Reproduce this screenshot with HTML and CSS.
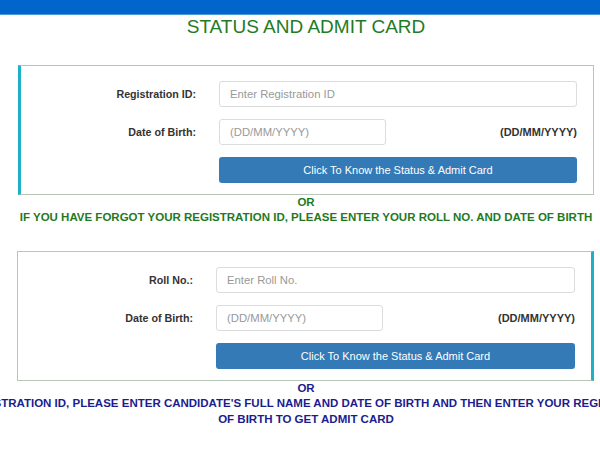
FILE: index.html
```html
<!DOCTYPE html>
<html lang="en">
<head>
    <meta charset="UTF-8">
    <meta name="viewport" content="width=device-width, initial-scale=1.0">
    <title>Status and Admit Card</title>
    <link rel="stylesheet" href="styles.css">
</head>
<body>
    <div class="top-bar"></div>

    <div class="page">
        <h2 class="page-title">STATUS AND ADMIT CARD</h2>

        <!-- Search by registration id -->
        <div class="search-box search-box-left">
            <div class="form-row">
                <label for="regId">Registration ID:</label>
                <input type="text" id="regId" placeholder="Enter Registration ID">
            </div>
            <div class="form-row">
                <label for="regDob">Date of Birth:</label>
                <div class="dob-field">
                    <input type="text" id="regDob" placeholder="(DD/MM/YYYY)">
                    <span class="dob-hint">(DD/MM/YYYY)</span>
                </div>
            </div>
            <div class="form-row">
                <span></span>
                <button>Click To Know the Status &amp; Admit Card</button>
            </div>
        </div>

        <p class="or-text">OR</p>
        <p class="note-green">IF YOU HAVE FORGOT YOUR REGISTRATION ID, PLEASE ENTER YOUR ROLL NO. AND DATE OF BIRTH</p>

        <!-- Search by roll no -->
        <div class="search-box search-box-right">
            <div class="form-row">
                <label for="rollNo">Roll No.:</label>
                <input type="text" id="rollNo" placeholder="Enter Roll No.">
            </div>
            <div class="form-row">
                <label for="rollDob">Date of Birth:</label>
                <div class="dob-field">
                    <input type="text" id="rollDob" placeholder="(DD/MM/YYYY)">
                    <span class="dob-hint">(DD/MM/YYYY)</span>
                </div>
            </div>
            <div class="form-row">
                <span></span>
                <button>Click To Know the Status &amp; Admit Card</button>
            </div>
        </div>

        <div class="note-navy">
            <p class="or-line">OR</p>
            <p>IF YOU HAVE FORGOT YOUR REGISTRATION ID, PLEASE ENTER CANDIDATE'S FULL NAME AND DATE OF BIRTH AND THEN ENTER YOUR REGISTERED MOBILE NUMBER AND DATE</p>
            <p>OF BIRTH TO GET ADMIT CARD</p>
        </div>
    </div>
</body>
</html>
```

FILE: styles.css
```css
* {
    box-sizing: border-box;
    margin: 0;
    padding: 0;
}

body {
    font-family: "Liberation Sans", Arial, sans-serif;
    background-color: #fff;
    width: 600px;
    height: 450px;
    overflow: hidden;
}

.top-bar {
    height: 15px;
    background-color: #0066cc;
    border-bottom: 1px solid #4a9ad8;
}

.page {
    width: 576px;
    margin-left: 18px;
}

.page-title {
    font-size: 19px;
    font-weight: normal;
    line-height: 24px;
    color: #257a25;
    text-align: center;
    margin-bottom: 26px;
}

.search-box {
    border: 1px solid #b7c6b9;
    padding: 15px 16px 11px 0;
    display: flex;
    flex-direction: column;
    gap: 12px;
}

.search-box-left {
    border-left: 3px solid #1eb0c6;
}

.search-box-right {
    margin-left: -1px;
    border-right: 3px solid #1eb0c6;
    padding-left: 2px;
    padding-right: 16px;
}

.form-row {
    display: grid;
    grid-template-columns: 175px 1fr;
    column-gap: 23px;
    align-items: center;
}

.search-box-right .form-row {
    grid-template-columns: 173px 1fr;
}

.form-row label {
    text-align: right;
    font-size: 10.7px;
    font-weight: bold;
    color: #333;
}

input {
    height: 26px;
    width: 100%;
    padding: 0 10px;
    border: 1px solid #dcdcdc;
    border-radius: 3px;
    font-family: inherit;
    font-size: 11.3px;
    color: #555;
}

input::placeholder {
    color: #999;
}

.dob-field {
    display: flex;
    justify-content: space-between;
    align-items: center;
}

.dob-field input {
    width: 167px;
}

.dob-hint {
    font-size: 11px;
    font-weight: bold;
    color: #333;
}

button {
    height: 26px;
    width: 100%;
    background-color: #337ab7;
    color: #fff;
    border: none;
    border-radius: 3px;
    font-family: inherit;
    font-size: 11px;
    cursor: pointer;
}

.or-text {
    text-align: center;
    font-size: 11.5px;
    font-weight: bold;
    line-height: 14px;
    color: #1f7a1f;
}

.note-green {
    text-align: center;
    font-size: 11.5px;
    font-weight: bold;
    line-height: 16px;
    color: #1f7a1f;
    white-space: nowrap;
    margin-bottom: 26px;
}

.note-navy {
    display: flex;
    flex-direction: column;
    align-items: center;
    font-size: 11.5px;
    font-weight: bold;
    line-height: 16px;
    color: #1c1c8e;
    white-space: nowrap;
}

.note-navy .or-line {
    line-height: 14px;
}
```
